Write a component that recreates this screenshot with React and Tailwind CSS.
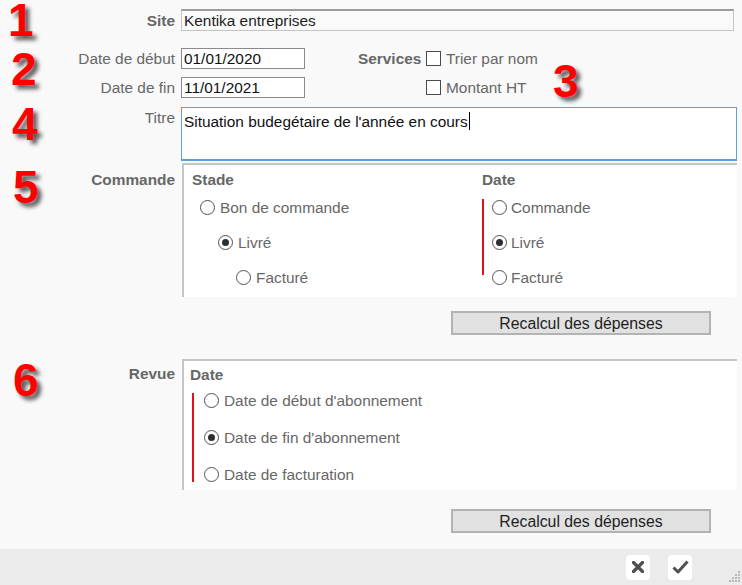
import React from "react";

const Radio = ({ checked }) => (
  <span className="flex h-[15px] w-[15px] shrink-0 items-center justify-center rounded-full border border-[#505050] bg-white">
    {checked && <span className="h-[7px] w-[7px] rounded-full bg-[#2f2f2f]" />}
  </span>
);

const Check = () => (
  <span className="block h-[15px] w-[15px] shrink-0 border border-[#4a4a4a] bg-white" />
);

const Num = ({ children, className }) => (
  <div
    className={
      "pointer-events-none absolute select-none text-[46px] font-bold leading-[40px] text-[#ff0000] [text-shadow:4px_4px_4px_rgba(0,0,0,0.65)] " +
      className
    }
  >
    {children}
  </div>
);

export default function App() {
  return (
    <div className="relative h-[585px] w-[742px] overflow-hidden bg-[#f9f9f9] font-['Liberation_Sans',Arial,sans-serif] text-[15.4px] leading-[17px] text-[#676767]">
      <div className="flex flex-col pt-[9px]">
        {/* Site */}
        <div className="flex h-[22px] items-center">
          <div className="w-[175px] text-right font-bold">Site</div>
          <div className="ml-[6px] flex h-[22px] w-[553px] items-center border border-[#c4c4c4] border-t-2 border-t-[#9c9c9c] bg-[#fafafa] pl-[2px] text-[#1e1e1e]">
            Kentika entreprises
          </div>
        </div>

        {/* Date de début */}
        <div className="mt-[17px] flex h-[21px] items-center">
          <div className="w-[175px] text-right">Date de début</div>
          <div className="ml-[6px] flex h-[21px] w-[124px] items-center border border-[#8a8a8a] bg-white pl-[2px] text-[#111]">
            01/01/2020
          </div>
          <div className="ml-[53px] w-[62px] text-right font-bold">Services</div>
          <div className="ml-[6px] flex items-center gap-[5px]">
            <Check />
            <span>Trier par nom</span>
          </div>
        </div>

        {/* Date de fin */}
        <div className="mt-[8px] flex h-[21px] items-center">
          <div className="w-[175px] text-right">Date de fin</div>
          <div className="ml-[6px] flex h-[21px] w-[124px] items-center border border-[#8a8a8a] bg-white pl-[2px] text-[#111]">
            11/01/2021
          </div>
          <div className="ml-[121px] flex items-center gap-[5px]">
            <Check />
            <span>Montant HT</span>
          </div>
        </div>

        {/* Titre */}
        <div className="mt-[9px] flex">
          <div className="w-[175px] pt-[2px] text-right">Titre</div>
          <div className="ml-[6px] h-[54px] w-[556px] border border-b-2 border-[#5aa0dc] bg-white pl-[2px] pt-[1px] text-[#111]">
            <span>Situation budegétaire de l'année en cours</span>
            <span className="ml-[1px] inline-block h-[18px] w-[1px] translate-y-[3px] bg-black" />
          </div>
        </div>

        {/* Commande */}
        <div className="mt-[2px] flex">
          <div className="w-[175px] pt-[8px] text-right font-bold">Commande</div>
          <div className="ml-[7px] flex h-[134px] w-[555px] rounded-br-[3px] border-l-2 border-t-2 border-[#c6c6c6] bg-white pl-[8px]">
            <div className="flex w-[290px] flex-col pt-[6px]">
              <div className="font-bold">Stade</div>
              <div className="mt-[9px] flex flex-col gap-[15px]">
                <div className="flex h-[20px] items-center gap-[5px] pl-[8px]">
                  <Radio />
                  <span>Bon de commande</span>
                </div>
                <div className="flex h-[20px] items-center gap-[5px] pl-[26px]">
                  <Radio checked />
                  <span>Livré</span>
                </div>
                <div className="flex h-[20px] items-center gap-[5px] pl-[44px]">
                  <Radio />
                  <span>Facturé</span>
                </div>
              </div>
            </div>
            <div className="flex flex-col pt-[6px]">
              <div className="font-bold">Date</div>
              <div className="mt-[9px] flex">
                <div className="mt-[2px] h-[76px] w-[2px] bg-[#e3101a]" />
                <div className="flex flex-col gap-[15px] pl-[8px]">
                  <div className="flex h-[20px] items-center gap-[4px]">
                    <Radio />
                    <span>Commande</span>
                  </div>
                  <div className="flex h-[20px] items-center gap-[4px]">
                    <Radio checked />
                    <span>Livré</span>
                  </div>
                  <div className="flex h-[20px] items-center gap-[4px]">
                    <Radio />
                    <span>Facturé</span>
                  </div>
                </div>
              </div>
            </div>
          </div>
        </div>

        <button className="ml-[451px] mt-[14px] flex h-[24px] w-[260px] items-center justify-center border-2 border-[#b3b3b3] bg-[#e1e1e1] text-[15.8px] text-[#1e1e1e]">
          Recalcul des dépenses
        </button>

        {/* Revue */}
        <div className="mt-[24px] flex">
          <div className="w-[175px] pt-[6px] text-right font-bold">Revue</div>
          <div className="ml-[7px] flex h-[131px] w-[555px] flex-col rounded-br-[3px] border-l-2 border-t-2 border-[#c6c6c6] bg-white pl-[6px] pt-[5px]">
            <div className="font-bold">Date</div>
            <div className="mt-[7px] flex">
              <div className="ml-[2px] mt-[3px] h-[89px] w-[2px] bg-[#e3101a]" />
              <div className="flex flex-col gap-[17px] pl-[10px]">
                <div className="flex h-[20px] items-center gap-[5px]">
                  <Radio />
                  <span>Date de début d'abonnement</span>
                </div>
                <div className="flex h-[20px] items-center gap-[5px]">
                  <Radio checked />
                  <span>Date de fin d'abonnement</span>
                </div>
                <div className="flex h-[20px] items-center gap-[5px]">
                  <Radio />
                  <span>Date de facturation</span>
                </div>
              </div>
            </div>
          </div>
        </div>

        <button className="ml-[451px] mt-[19px] flex h-[24px] w-[260px] items-center justify-center border-2 border-[#b3b3b3] bg-[#e1e1e1] text-[15.8px] text-[#1e1e1e]">
          Recalcul des dépenses
        </button>

        {/* Bottom bar */}
        <div className="relative mt-[16px] flex h-[36px] items-center justify-end gap-[18px] bg-[#ebebeb] pr-[50px]">
          <div className="flex h-[25px] w-[24px] items-center justify-center rounded-[4px] bg-white">
            <svg width="12" height="12" viewBox="0 0 12 12">
              <path d="M1.5 1.5 L10.5 10.5 M10.5 1.5 L1.5 10.5" stroke="#4f4f4f" strokeWidth="3.2" strokeLinecap="round" />
            </svg>
          </div>
          <div className="flex h-[25px] w-[24px] items-center justify-center rounded-[4px] bg-white">
            <svg width="17" height="14" viewBox="0 0 17 14">
              <path d="M1.5 7.5 L6 12 L15.5 1.5" fill="none" stroke="#4f4f4f" strokeWidth="3" strokeLinejoin="round" />
            </svg>
          </div>
          <svg className="absolute bottom-[1px] right-[1px]" width="14" height="14" viewBox="0 0 14 14">
            {[
              [12, 2], [12, 5], [9, 5], [12, 8], [9, 8], [6, 8], [12, 11], [9, 11], [6, 11], [3, 11],
            ].map(([x, y], i) => (
              <rect key={i} x={x - 1} y={y - 1} width="2" height="2" fill="#b8b8b8" />
            ))}
          </svg>
        </div>
      </div>

      <Num className="left-[8px] top-[0px]">1</Num>
      <Num className="left-[11px] top-[49px]">2</Num>
      <Num className="left-[553px] top-[61px]">3</Num>
      <Num className="left-[12px] top-[104px]">4</Num>
      <Num className="left-[13px] top-[167px]">5</Num>
      <Num className="left-[13px] top-[360px]">6</Num>
    </div>
  );
}
